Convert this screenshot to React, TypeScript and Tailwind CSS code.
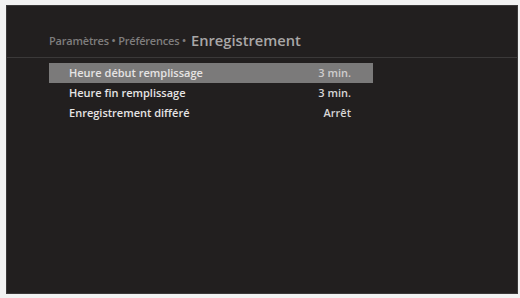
import React from "react";

const rows = [
  { label: "Heure début remplissage", value: "3 min.", active: true },
  { label: "Heure fin remplissage", value: "3 min.", active: false },
  { label: "Enregistrement différé", value: "Arrêt", active: false },
];

export default function App() {
  return (
    <div className="w-[520px] h-[298px] bg-[#f2f2f2] pl-[6px] pt-[5px] pr-[2px] pb-[4px]" style={{ fontFamily: '"Open Sans", "Liberation Sans", sans-serif' }}>
      <div className="w-full h-full bg-[#221f1f] border border-[#3a3838] flex flex-col">
        <div className="h-[52px] flex items-end pl-[42px] pb-[8px] border-b border-[#3b3939]">
          <span className="text-[11px] leading-[16px] text-[#7f7d7d] font-semibold tracking-[-0.2px]">Paramètres • Préférences •</span>
          <span className="ml-[5px] text-[14.7px] leading-[18px] text-[#a9a7a7] font-semibold">Enregistrement</span>
        </div>
        <div className="pt-[5px] pl-[42px] flex flex-col">
          {rows.map((r) => (
            <div
              key={r.label}
              className={`w-[324px] h-[20px] flex items-center justify-between pl-[20px] pr-[22px] ${r.active ? "bg-[#7b7a7a]" : ""}`}
            >
              <span className="text-[11px] font-semibold text-[#e6e4e4]">{r.label}</span>
              <span className={`text-[11px] font-semibold ${r.active ? "text-[#cfcdcd]" : "text-[#d8d6d6]"}`}>{r.value}</span>
            </div>
          ))}
        </div>
      </div>
    </div>
  );
}
